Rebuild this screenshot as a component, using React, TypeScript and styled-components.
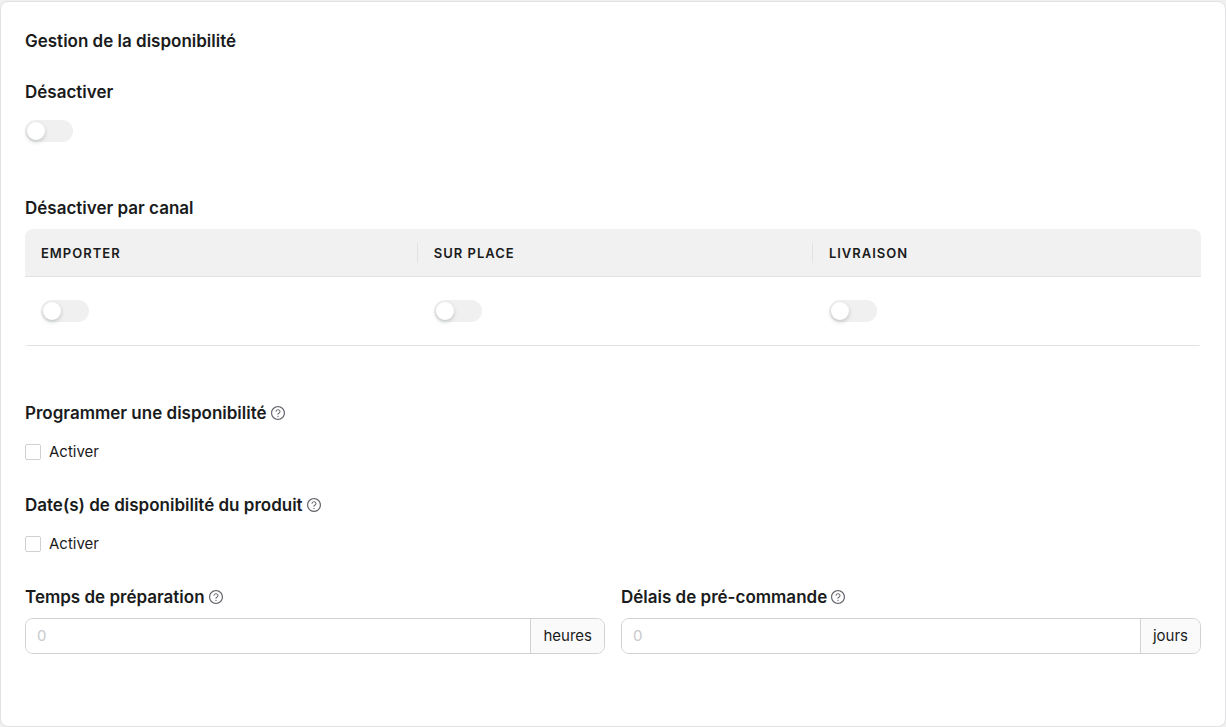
import React from "react";
import styled, { createGlobalStyle } from "styled-components";
import { AiOutlineQuestionCircle } from "react-icons/ai";

const GlobalStyle = createGlobalStyle`
  *, *::before, *::after { box-sizing: border-box; }
  body {
    margin: 0;
    background: #f0f0f1;
    color: #1a1b1c;
    font-family: Inter, "Liberation Sans", sans-serif;
    font-size: 15px;
    line-height: 22px;
  }
`;

const Card = styled.main`
  margin-top: 1px;
  padding: 24px 24px 72px;
  background: #fff;
  border: 1px solid #e2e2e4;
  border-radius: 8px;
`;

const Title = styled.h2`
  margin: 0 0 24px;
  font-size: 17px;
  line-height: 30px;
  font-weight: 600;
`;

const Section = styled.section<{ $space: number }>`
  margin-bottom: ${(p) => p.$space}px;
`;

const Heading = styled.div<{ $gap: number }>`
  display: flex;
  align-items: center;
  gap: 3px;
  margin-bottom: ${(p) => p.$gap}px;
  font-size: 17px;
  line-height: 24px;
  font-weight: 600;
`;

const HelpIcon = styled(AiOutlineQuestionCircle)`
  width: 16px;
  height: 16px;
  color: #66666e;
`;

const Switch = styled.input`
  appearance: none;
  display: block;
  width: 48px;
  height: 22px;
  margin: 0;
  padding: 2px;
  border-radius: 11px;
  background: #f0f0f0;
  cursor: pointer;

  &::before {
    content: "";
    display: block;
    width: 18px;
    height: 18px;
    border-radius: 9px;
    background: #fff;
    box-shadow: 0 2px 4px rgba(0, 35, 11, 0.2);
  }
  &:checked {
    background: #1a1b1c;
  }
  &:checked::before {
    margin-left: auto;
  }
`;

const Table = styled.table`
  width: 100%;
  table-layout: fixed;
  border-collapse: separate;
  border-spacing: 0;
`;

const Column = styled.col<{ $width?: string }>`
  width: ${(p) => p.$width ?? "auto"};
`;

const HeadCell = styled.th`
  height: 48px;
  padding: 0;
  background: #f1f1f1;
  border-bottom: 1px solid #e2e2e2;
  text-align: left;

  &:first-child { border-top-left-radius: 8px; }
  &:last-child { border-top-right-radius: 8px; }
`;

const HeadLabel = styled.div`
  padding-left: 16px;
  border-right: 1px solid #e2e2e2;
  font-size: 13px;
  line-height: 20px;
  font-weight: 600;
  letter-spacing: 1px;
  text-transform: uppercase;

  ${HeadCell}:last-child & { border-right: 0; }
`;

const Cell = styled.td`
  padding: 23px 16px;
  border-bottom: 1px solid #e2e2e2;

  &:first-child { border-bottom-left-radius: 8px 1px; }
  &:last-child { border-bottom-right-radius: 8px 1px; }
`;

const CheckLabel = styled.label`
  display: inline-flex;
  align-items: center;
  gap: 8px;
  vertical-align: top;
  cursor: pointer;
`;

const Checkbox = styled.input`
  appearance: none;
  width: 16px;
  height: 16px;
  margin: 0;
  background: #fff;
  border: 1px solid #d0d0d3;
  border-radius: 2px;

  &:checked { background: #1a1b1c; }
`;

const Fields = styled.div`
  display: grid;
  grid-template-columns: 1fr 1fr;
  gap: 16px;
`;

const InputGroup = styled.div`
  display: flex;
  height: 36px;
  border: 1px solid #d2d2d4;
  border-radius: 8px;
  overflow: hidden;
`;

const NumberInput = styled.input`
  flex: 1;
  min-width: 0;
  padding: 0 11px;
  border: 0;
  outline: 0;
  background: #fff;
  color: inherit;
  font: inherit;

  &::placeholder { color: #c9c9cb; opacity: 1; }
`;

const Addon = styled.span`
  display: flex;
  align-items: center;
  padding: 0 12px;
  background: #fafafa;
  border-left: 1px solid #d2d2d4;
`;

const channels = ["Emporter", "Sur place", "Livraison"];

const schedules = [
  { id: "programmer", title: "Programmer une disponibilité" },
  { id: "dates", title: "Date(s) de disponibilité du produit" },
];

const delays = [
  { id: "preparation", title: "Temps de préparation", unit: "heures" },
  { id: "precommande", title: "Délais de pré-commande", unit: "jours" },
];

export default function App() {
  return (
    <>
      <GlobalStyle />
      <Card>
        <Title>Gestion de la disponibilité</Title>

        <Section $space={54}>
          <Heading $gap={16}>
            <label htmlFor="desactiver">Désactiver</label>
          </Heading>
          <Switch id="desactiver" type="checkbox" role="switch" />
        </Section>

        <Section $space={55}>
          <Heading $gap={9} id="canaux">Désactiver par canal</Heading>
          <Table aria-labelledby="canaux">
            <colgroup>
              <Column $width="33.4%" />
              <Column $width="33.6%" />
              <Column />
            </colgroup>
            <thead>
              <tr>
                {channels.map((name) => (
                  <HeadCell key={name} scope="col">
                    <HeadLabel>{name}</HeadLabel>
                  </HeadCell>
                ))}
              </tr>
            </thead>
            <tbody>
              <tr>
                {channels.map((name) => (
                  <Cell key={name}>
                    <Switch type="checkbox" role="switch" aria-label={name} />
                  </Cell>
                ))}
              </tr>
            </tbody>
          </Table>
        </Section>

        {schedules.map(({ id, title }) => (
          <Section key={id} $space={30}>
            <Heading $gap={16}>
              {title}
              <HelpIcon />
            </Heading>
            <CheckLabel htmlFor={id}>
              <Checkbox id={id} type="checkbox" />
              Activer
            </CheckLabel>
          </Section>
        ))}

        <Fields>
          {delays.map(({ id, title, unit }) => (
            <div key={id}>
              <Heading $gap={9}>
                <label htmlFor={id}>{title}</label>
                <HelpIcon />
              </Heading>
              <InputGroup>
                <NumberInput id={id} type="text" inputMode="numeric" placeholder="0" />
                <Addon>{unit}</Addon>
              </InputGroup>
            </div>
          ))}
        </Fields>
      </Card>
    </>
  );
}
